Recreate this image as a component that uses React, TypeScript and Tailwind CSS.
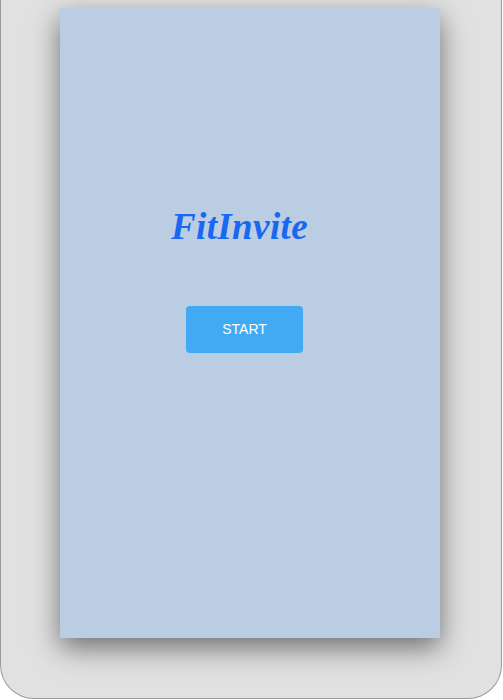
export default function App() {
  return (
    <div className="w-[503px] h-[700px] bg-white overflow-hidden">
      <div className="w-[502px] h-[699px] bg-[#e1e1e1] border border-t-0 border-[#9a9a9a] rounded-b-[34px] overflow-hidden">
        <div className="ml-[59px] mt-[8px] w-[380px] h-[630px] bg-[#bbcde3] shadow-[0_10px_26px_rgba(0,0,0,0.5)] flex flex-col">
          <div className="pt-[200px] pr-[21px] flex justify-center">
            <span
              className="text-[37px] leading-[37px] font-bold italic tracking-[0.4px] text-[#1a68f2]"
              style={{ fontFamily: '"Liberation Serif", "Times New Roman", serif' }}
            >
              FitInvite
            </span>
          </div>
          <div className="mt-[61px] pr-[11px] flex justify-center">
            <button
              className="w-[117px] h-[47px] rounded-[4px] bg-[#42aaf3] text-white text-[14px]"
              style={{ fontFamily: '"Liberation Sans", Arial, sans-serif' }}
            >
              START
            </button>
          </div>
        </div>
      </div>
    </div>
  );
}
